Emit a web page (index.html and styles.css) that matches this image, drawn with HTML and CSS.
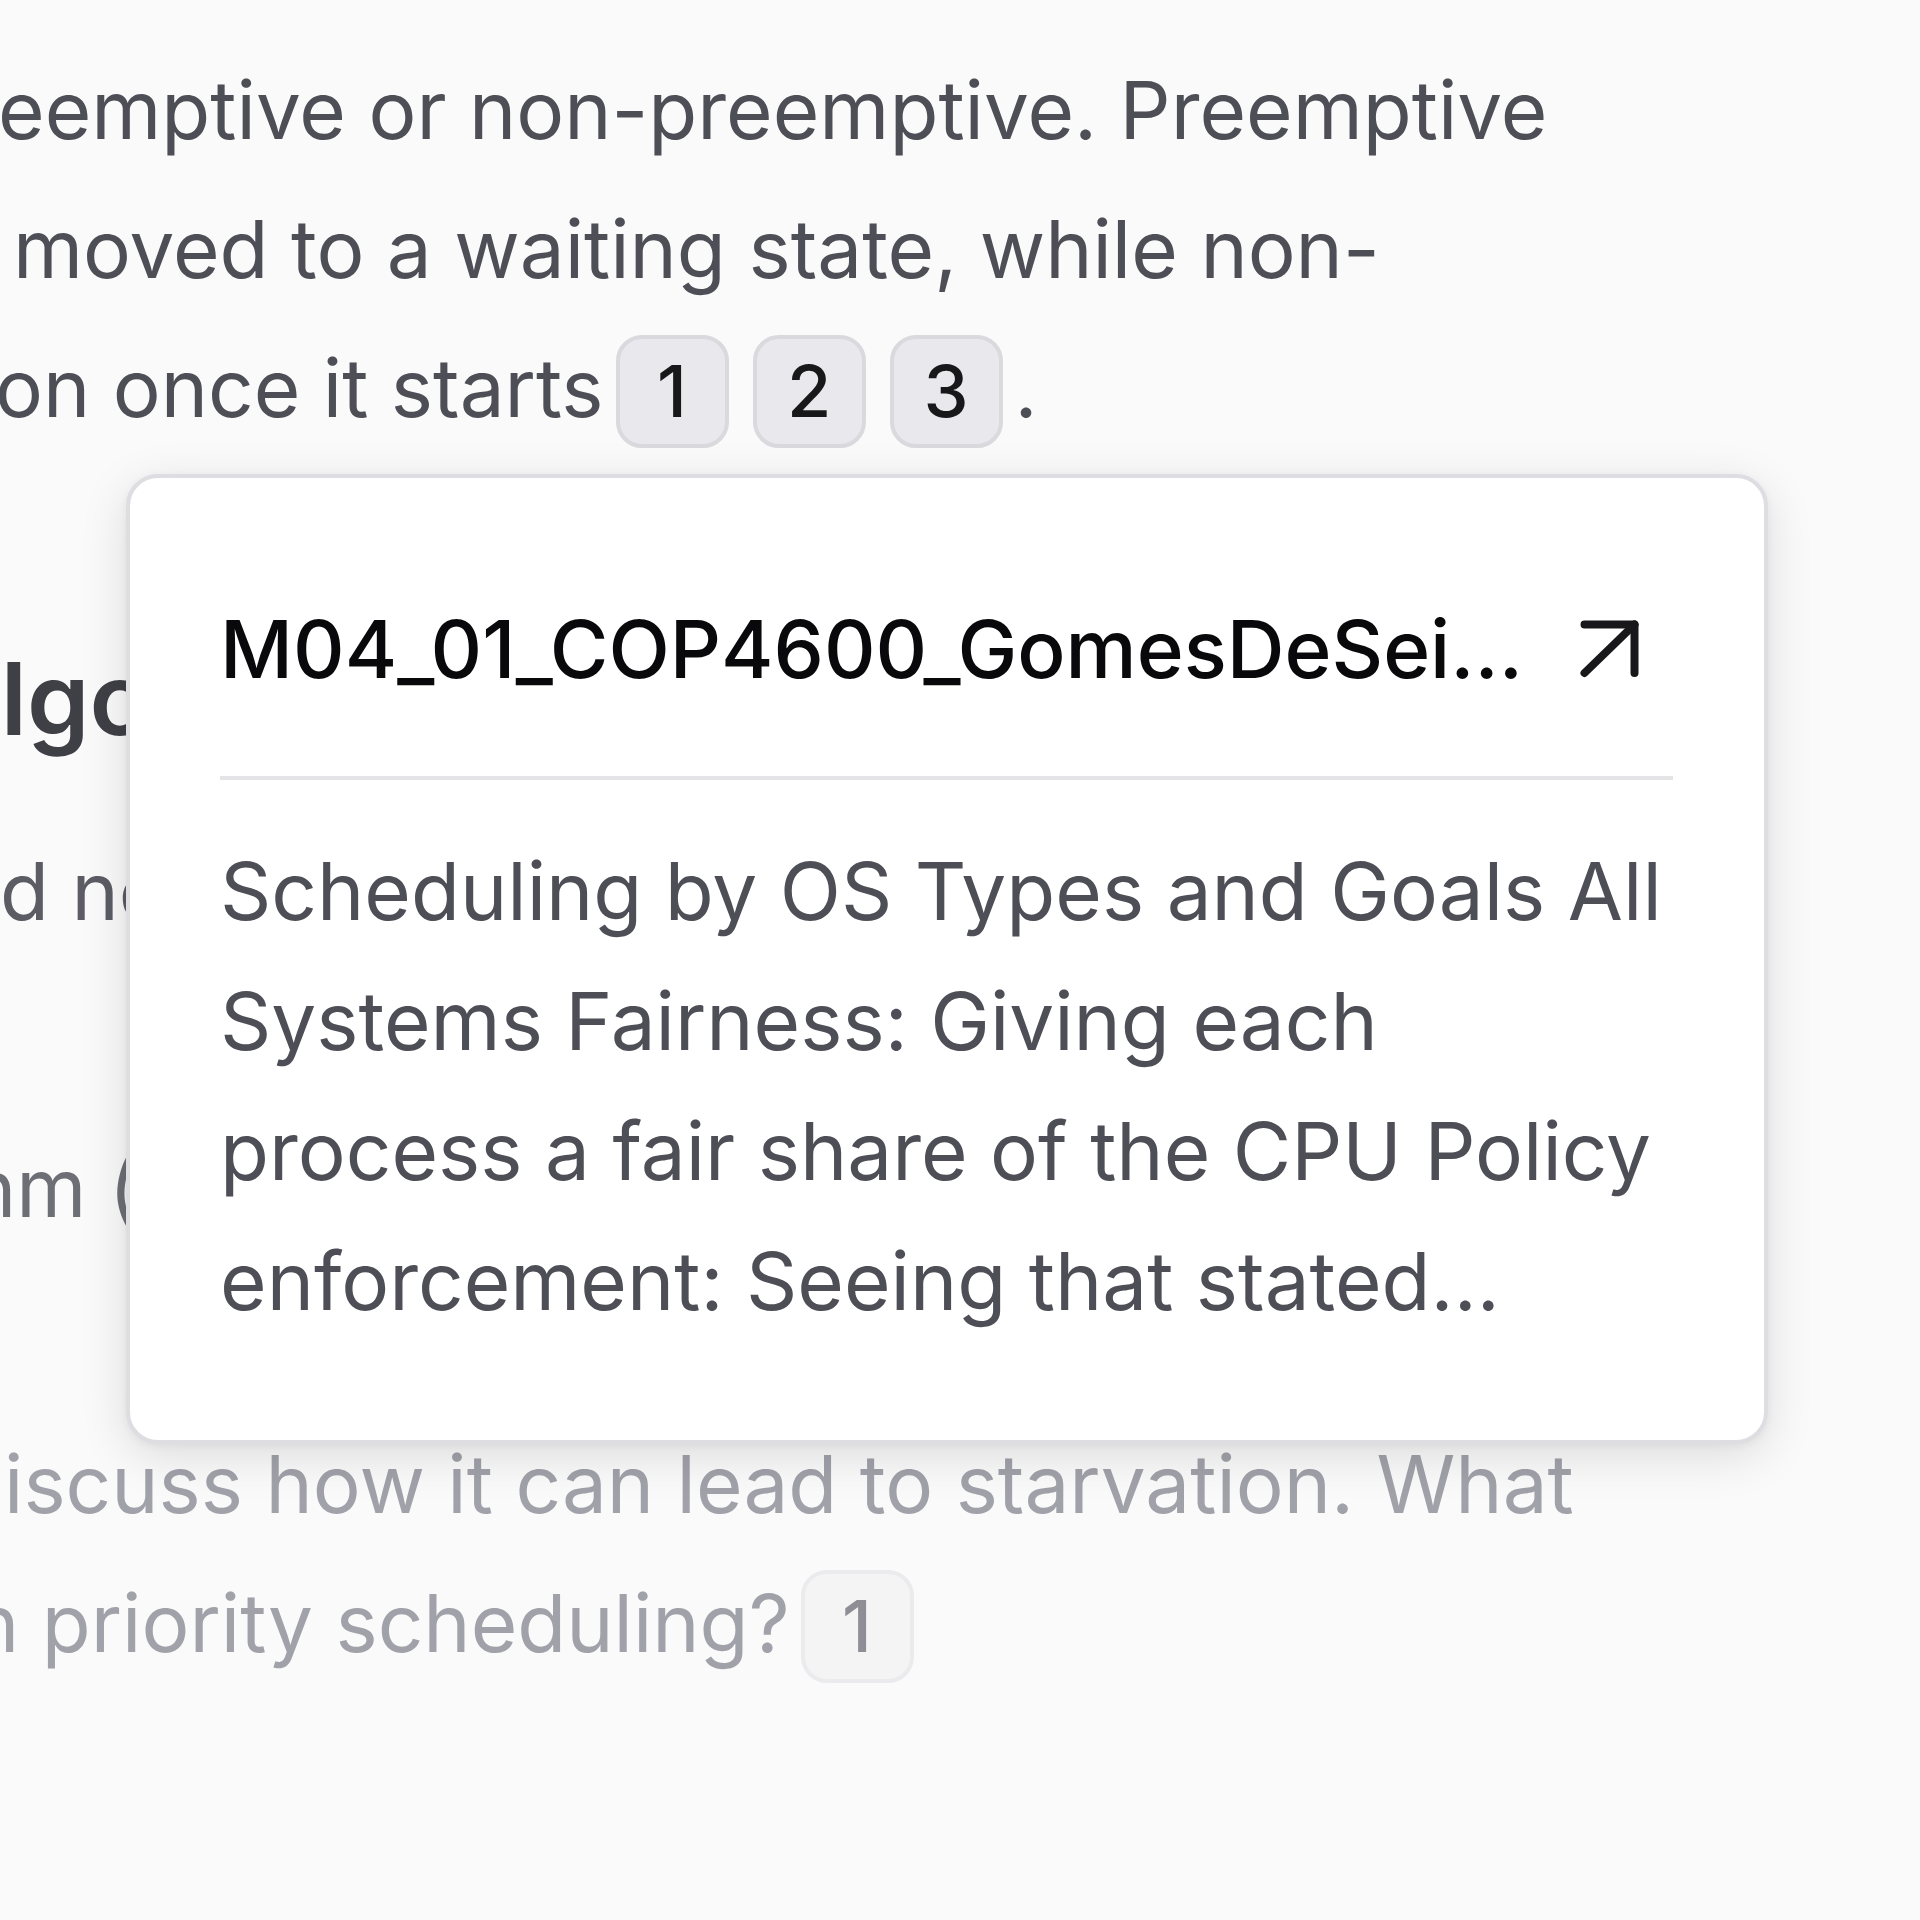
FILE: index.html
```html
<!DOCTYPE html>
<html lang="en">
<head>
<meta charset="utf-8">
<title>Citation preview</title>
<link rel="stylesheet" href="styles.css">
</head>
<body>
<main class="doc">
  <p class="para">
    <span class="line l1">eemptive or non-preemptive. Preemptive</span>
    <span class="line l2">moved to a waiting state, while non-</span>
    <span class="line l3">on once it starts<span class="cite">1</span><span class="cite">2</span><span class="cite">3</span>.</span>
  </p>
  <h2 class="heading">Algorithms</h2>
  <p class="para muted1"><span class="line l4">d non-preemptive</span></p>
  <p class="para muted2"><span class="line l5">nm (</span></p>
  <p class="para faded">
    <span class="line l6">iscuss how it can lead to starvation. What</span>
    <span class="line l7">n priority scheduling?<span class="cite cite-faded">1</span></span>
  </p>
</main>
<div class="popover">
  <div class="pop-head">
    <span class="pop-title">M04_01_COP4600_GomesDeSei...</span>
    <svg class="pop-icon" width="62" height="62" viewBox="0 0 62 62" fill="none" stroke="#18181b" stroke-width="8" stroke-linecap="round" stroke-linejoin="round"><path d="M5.5 6.5H55.5V55"/><path d="M5.5 55L55.5 6.5"/></svg>
  </div>
  <div class="pop-rule"></div>
  <p class="pop-body">
    <span class="pop-line">Scheduling by OS Types and Goals All</span>
    <span class="pop-line">Systems Fairness: Giving each</span>
    <span class="pop-line">process a fair share of the CPU Policy</span>
    <span class="pop-line">enforcement: Seeing that stated...</span>
  </p>
</div>
</body>
</html>
```

FILE: styles.css
```css
html, body {
  margin: 0;
  padding: 0;
}
body {
  background: #fafafa;
  font-family: Inter, "Noto Sans", sans-serif;
  overflow: hidden;
  width: 1920px;
  height: 1920px;
  position: relative;
}
.doc {
  padding-top: 40px;
}
.para {
  margin: 0;
  font-size: 80px;
  line-height: 139px;
  font-weight: 400;
  color: #4e4e57;
}
.line {
  display: block;
  white-space: nowrap;
}
.l1 { margin-left: -2px; }
.l2 { margin-left: 13px; }
.l3 { margin-left: -5px; }
.l4 { margin-left: 0; }
.l5 { margin-left: -31px; }
.l6 { margin-left: 4px; }
.l7 { margin-left: -28px; }

.heading {
  margin: 182px 0 0 -72px;
  font-size: 100px;
  line-height: 120px;
  font-weight: 600;
  color: #3f3f46;
  white-space: nowrap;
}
.muted1 { margin-top: 62px; color: #5c5c64; }
.muted2 { margin-top: 158px; color: #6e6e76; }
.faded { margin-top: 157px; color: #a1a1aa; }

.cite {
  display: inline-flex;
  align-items: center;
  justify-content: center;
  box-sizing: border-box;
  width: 113px;
  height: 113px;
  margin: 0 12px;
  border: 4px solid #d9d9de;
  border-radius: 26px;
  background: #e9e9ed;
  color: #18181b;
  font-size: 72px;
  line-height: 72px;
  font-weight: 500;
  vertical-align: baseline;
}
.cite-faded {
  background: #f4f4f5;
  border-color: #ebebee;
  color: #8e8e94;
  margin-left: 11px;
}

.popover {
  position: absolute;
  left: 126px;
  top: 474px;
  width: 1642px;
  box-sizing: border-box;
  border: 4px solid #dedee2;
  border-radius: 32px;
  background: #ffffff;
  padding: 0 91px 94px 90px;
  box-shadow: 0 12px 48px rgba(0, 0, 0, 0.12), 0 2px 8px rgba(0, 0, 0, 0.05);
}
.pop-head {
  display: flex;
  align-items: center;
  height: 120px;
  margin-top: 111px;
}
.pop-title {
  font-size: 80px;
  line-height: 120px;
  font-weight: 500;
  color: #09090b;
  white-space: nowrap;
}
.pop-icon {
  margin-left: auto;
  margin-right: 32px;
  flex: none;
}
.pop-rule {
  height: 4px;
  margin-top: 67px;
  background: #e4e4e7;
}
.pop-body {
  margin: 46px 0 0;
  font-size: 80px;
  line-height: 130px;
  color: #4e4e57;
}
.pop-line {
  display: block;
  white-space: nowrap;
}
```
